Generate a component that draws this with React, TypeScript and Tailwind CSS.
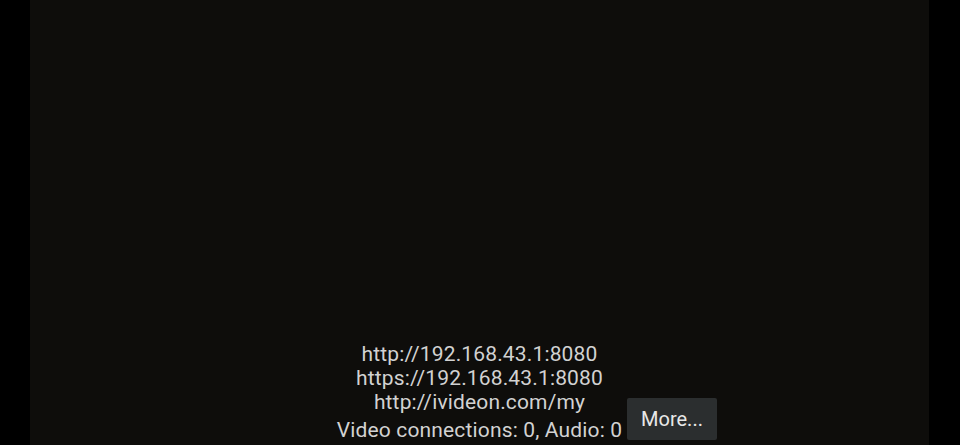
export default function App() {
  return (
    <div className="flex h-[445px] w-[960px] bg-black font-['Roboto',sans-serif]">
      <div className="relative ml-[30px] flex h-full w-[899px] flex-col justify-end bg-[#0e0d0b]">
        <div className="flex flex-col items-center text-[21px] leading-[24px] tracking-[0.15px] text-[#d2d2d2]">
          <span>http://192.168.43.1:8080</span>
          <span>https://192.168.43.1:8080</span>
          <span>http://ivideon.com/my</span>
          <span className="mt-[2px] leading-[29px]">Video connections: 0, Audio: 0</span>
        </div>
        <button className="absolute left-[597px] top-[398px] flex h-[42px] w-[90px] items-center justify-center rounded-[2px] bg-[#2b2e2f] text-[20px] text-[#e8e8e8]">
          More...
        </button>
      </div>
    </div>
  )
}
